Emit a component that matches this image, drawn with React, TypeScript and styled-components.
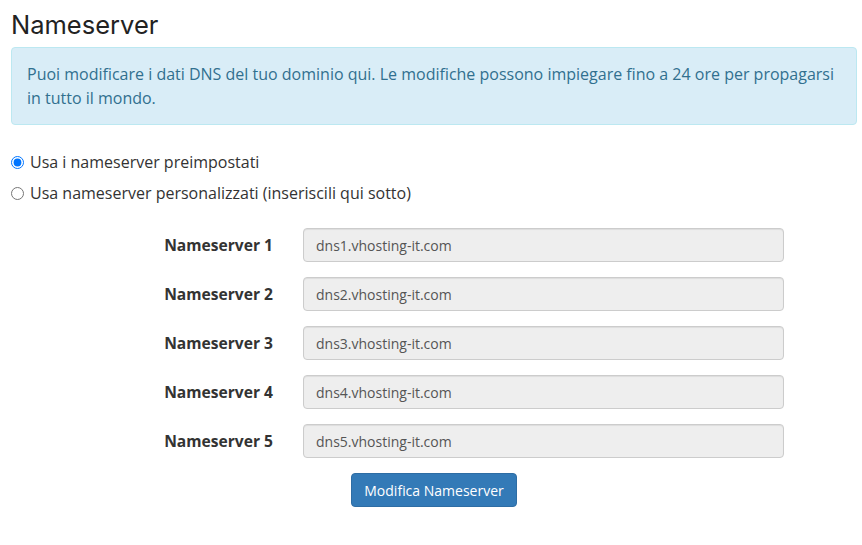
import styled, { createGlobalStyle } from "styled-components";

const GlobalStyle = createGlobalStyle`
  body {
    margin: 0;
    background: #fff;
    font-family: "Open Sans", "Liberation Sans", sans-serif;
    color: #333;
  }
`;

const Page = styled.div`
  padding: 0 5px 0 11px;
`;

const Title = styled.h1`
  margin: 0;
  padding-top: 9px;
  font-family: "Inter", "Liberation Sans", sans-serif;
  font-weight: 400;
  font-size: 25.5px;
  line-height: 32px;
  color: #222;
`;

const Alert = styled.div`
  margin-top: 6px;
  padding: 14px 15px;
  background: #d9edf7;
  border: 1px solid #bce8f1;
  border-radius: 4px;
  color: #31708f;
  font-size: 16px;
  line-height: 24px;
`;

const Choices = styled.div`
  margin-top: 26px;
  display: flex;
  flex-direction: column;
  gap: 9px;
`;

const Choice = styled.label`
  display: flex;
  align-items: center;
  gap: 6px;
  font-size: 16px;
  line-height: 22px;
  color: #333;
`;

const Radio = styled.input`
  margin: 0;
  width: 13px;
  height: 13px;
`;

const Form = styled.div`
  margin-top: 24px;
  display: grid;
  grid-template-columns: 262px 481px;
  column-gap: 30px;
  row-gap: 15px;
  align-items: center;
`;

const Label = styled.label`
  text-align: right;
  font-weight: 700;
  font-size: 15.6px;
  color: #333;
`;

const Field = styled.input`
  box-sizing: border-box;
  height: 34px;
  width: 100%;
  padding: 0 12px;
  background: #eee;
  border: 1px solid #ccc;
  border-radius: 4px;
  font-family: "Open Sans", "Liberation Sans", sans-serif;
  font-size: 14px;
  color: #555;
  box-shadow: inset 0 1px 1px rgba(0, 0, 0, 0.075);
`;

const Actions = styled.div`
  margin-top: 15px;
  display: flex;
  justify-content: center;
`;

const Button = styled.button`
  height: 34px;
  padding: 0 12px;
  background: #337ab7;
  border: 1px solid #2e6da4;
  border-radius: 4px;
  color: #fff;
  font-family: "Open Sans", "Liberation Sans", sans-serif;
  font-size: 14px;
`;

const servers = [
  "dns1.vhosting-it.com",
  "dns2.vhosting-it.com",
  "dns3.vhosting-it.com",
  "dns4.vhosting-it.com",
  "dns5.vhosting-it.com",
];

export default function App() {
  return (
    <>
      <GlobalStyle />
      <Page>
        <Title>Nameserver</Title>
        <Alert>
          Puoi modificare i dati DNS del tuo dominio qui. Le modifiche possono impiegare fino a 24 ore per propagarsi
          in tutto il mondo.
        </Alert>
        <Choices>
          <Choice>
            <Radio type="radio" name="ns" defaultChecked />
            Usa i nameserver preimpostati
          </Choice>
          <Choice>
            <Radio type="radio" name="ns" />
            Usa nameserver personalizzati (inseriscili qui sotto)
          </Choice>
        </Choices>
        <Form>
          {servers.map((s, i) => (
            <>
              <Label key={"l" + i}>Nameserver {i + 1}</Label>
              <Field key={"f" + i} value={s} disabled readOnly />
            </>
          ))}
        </Form>
        <Actions>
          <Button>Modifica Nameserver</Button>
        </Actions>
      </Page>
    </>
  );
}
